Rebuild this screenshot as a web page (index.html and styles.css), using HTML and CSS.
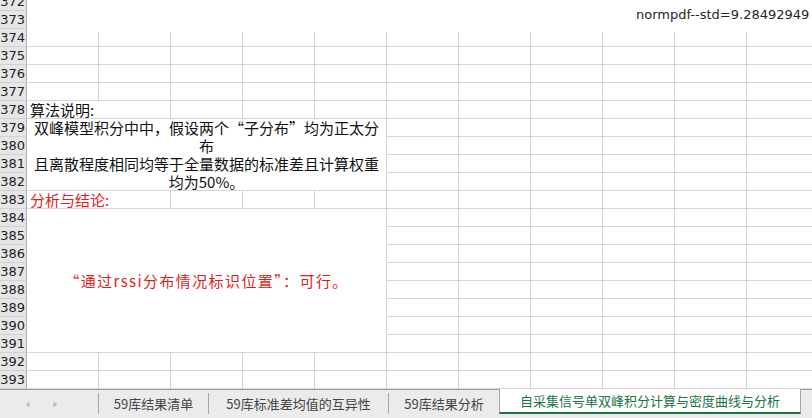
FILE: index.html
```html
<!DOCTYPE html>
<html lang="zh-CN">
<head>
<meta charset="utf-8">
<title>Sheet</title>
<link rel="stylesheet" href="styles.css">
</head>
<body>
<div class="sheet">
  <div class="gridwrap">
    <div class="grid">
      <div class="cell c-label">算法说明:</div>
      <div class="cell c-desc">
        <div>双峰模型积分中中，假设两个“子分布”均为正太分</div>
        <div>布</div>
        <div>且离散程度相同均等于全量数据的标准差且计算权重</div>
        <div>均为50%。</div>
      </div>
      <div class="cell c-concl">分析与结论:</div>
      <div class="cell c-result">“通过rssi分布情况标识位置”：可行。</div>
      <div class="rh">372</div>
      <div class="rh">373</div>
      <div class="rh">374</div>
      <div class="rh">375</div>
      <div class="rh">376</div>
      <div class="rh">377</div>
      <div class="rh">378</div>
      <div class="rh">379</div>
      <div class="rh">380</div>
      <div class="rh">381</div>
      <div class="rh">382</div>
      <div class="rh">383</div>
      <div class="rh">384</div>
      <div class="rh">385</div>
      <div class="rh">386</div>
      <div class="rh">387</div>
      <div class="rh">388</div>
      <div class="rh">389</div>
      <div class="rh">390</div>
      <div class="rh">391</div>
      <div class="rh">392</div>
      <div class="rh">393</div>
    </div>
  </div>
  <div class="chart">normpdf--std=9.28492949</div>
  <div class="tabs">
    <div class="nav">
      <svg class="arr" width="5" height="7" viewBox="0 0 5 7"><path d="M4.5 0.5 L0.5 3.5 L4.5 6.5 Z"/></svg>
      <svg class="arr" width="5" height="7" viewBox="0 0 5 7"><path d="M0.5 0.5 L4.5 3.5 L0.5 6.5 Z"/></svg>
    </div>
    <div class="tab t1">59库结果清单</div>
    <div class="tab t2">59库标准差均值的互异性</div>
    <div class="tab t3">59库结果分析</div>
    <div class="tab active">自采集信号单双峰积分计算与密度曲线与分析</div>
  </div>
</div>
</body>
</html>
```
FILE: styles.css
```css
html, body {
  margin: 0;
  padding: 0;
}
body {
  width: 812px;
  height: 418px;
  overflow: hidden;
  background: #fff;
  font-family: "Noto Sans CJK SC", "Noto Sans", sans-serif;
}
.sheet {
  position: relative;
  width: 812px;
  height: 418px;
  overflow: hidden;
}
.gridwrap {
  height: 389px;
  overflow: hidden;
}
.grid {
  display: grid;
  grid-template-columns: 27px repeat(11, 72px);
  grid-template-rows: repeat(22, 18px);
  width: 819px;
  margin-top: -7px;
  background-color: #fff;
  background-image:
    linear-gradient(to right, transparent 71px, #d2d2d2 71px),
    linear-gradient(to bottom, transparent 17px, #d6d6d6 17px);
  background-size: 72px 18px, 72px 18px;
  background-position: 27px 0, 27px 0;
}
.rh {
  grid-column: 1;
  box-sizing: border-box;
  background: #e6e6e6;
  border-right: 1px solid #b0b0b0;
  border-bottom: 1px solid #d2d2d2;
  font: 13px/17px "DejaVu Sans", sans-serif;
  color: #222;
  text-align: right;
  padding-right: 1px;
  overflow: hidden;
  white-space: nowrap;
}
.cell {
  box-sizing: border-box;
  background: #fff;
  border-right: 1px solid #d2d2d2;
  border-bottom: 1px solid #d6d6d6;
  font-size: 15px;
  line-height: 18px;
  color: #111;
  white-space: nowrap;
}
.c-label {
  grid-column: 2 / 4;
  grid-row: 7;
  padding-left: 3px;
  line-height: 17px;
}
.c-desc {
  grid-column: 2 / 7;
  grid-row: 8 / 12;
  display: flex;
  flex-direction: column;
  justify-content: center;
  text-align: center;
}
.c-concl {
  grid-column: 2 / 4;
  grid-row: 12;
  padding-left: 3px;
  line-height: 17px;
  color: #e01c1c;
}
.c-result {
  grid-column: 2 / 7;
  grid-row: 13 / 21;
  display: flex;
  align-items: center;
  justify-content: center;
  letter-spacing: 1.4px;
  color: #e01c1c;
}
.chart {
  position: absolute;
  left: 27px;
  top: 0;
  width: 785px;
  height: 32px;
  box-sizing: border-box;
  background: #fff;
  padding-left: 609px;
  font: 13px/30px "DejaVu Sans", sans-serif;
  color: #262626;
  white-space: nowrap;
  overflow: hidden;
}
.tabs {
  display: flex;
  align-items: flex-start;
  height: 29px;
  box-sizing: border-box;
  border-top: 1px solid #9c9c9c;
  background: #ebebeb;
  font-size: 13px;
  color: #444;
}
.nav {
  width: 98px;
  height: 28px;
  display: flex;
  align-items: center;
  gap: 23px;
  padding-left: 25px;
  box-sizing: border-box;
}
.arr {
  fill: #bdbdbd;
}
.tab {
  box-sizing: border-box;
  margin-top: 3px;
  height: 21px;
  border-left: 1px solid #a6a6a6;
  display: flex;
  align-items: center;
  justify-content: center;
  white-space: nowrap;
  line-height: 1;
}
.t1 { width: 110px; }
.t2 { width: 180px; }
.t3 { width: 111px; }
.active {
  width: 302px;
  margin-top: -1px;
  height: 25px;
  background: #fff;
  border-right: 1px solid #a6a6a6;
  border-bottom: 2px solid #217346;
  color: #217346;
}
```
